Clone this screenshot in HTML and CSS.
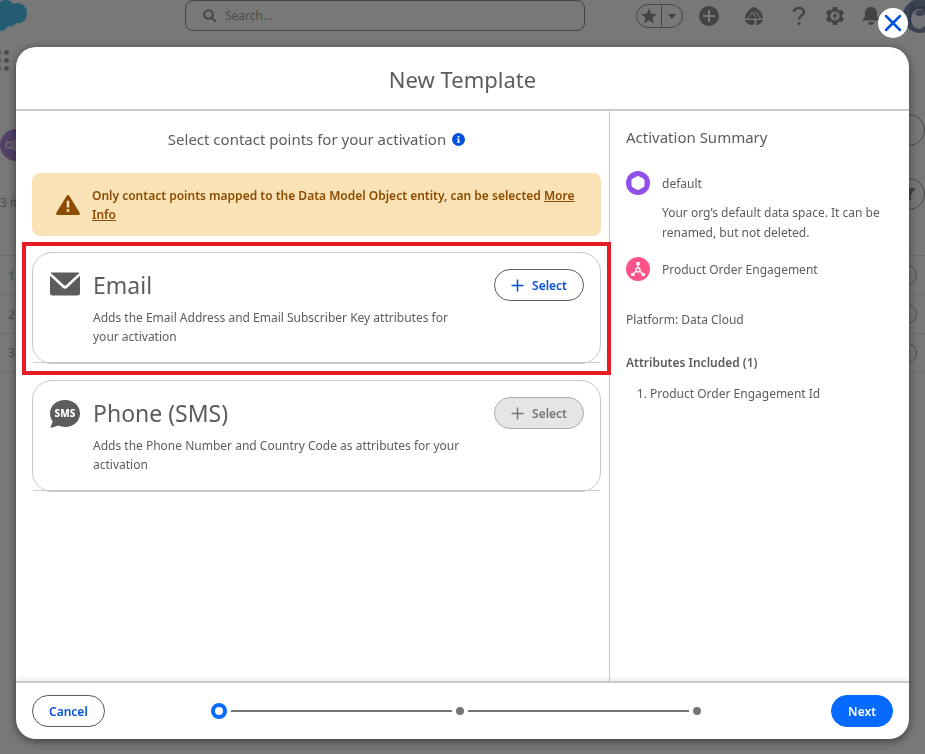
FILE: index.html
```html
<!DOCTYPE html>
<html lang="en">
<head>
    <meta charset="UTF-8">
    <meta name="viewport" content="width=device-width, initial-scale=1.0">
    <title>New Template</title>
    <link rel="stylesheet" href="styles.css">
</head>
<body>

    <div class="app">
        <header class="app-header">
            <svg class="cloud" width="28" height="32" viewBox="0 0 28 32" aria-hidden="true">
                <path d="M0 2C3-1 10-1 13 4C20 1 27 6 27 13C27 20 22 24 16 23C14 26 11 27 8 26C6 30 3 31 0 31Z"/>
            </svg>
            <div class="search">
                <svg width="14" height="14" viewBox="0 0 14 14" aria-hidden="true">
                    <circle cx="5.5" cy="5.5" r="4.3"/>
                    <path d="M8.8 8.8L12.8 12.8"/>
                </svg>
                <input type="search" placeholder="Search..." aria-label="Search">
            </div>
            <nav class="actions">
                <div class="favorites">
                    <button type="button" aria-label="Favorite">
                        <svg width="18" height="18" viewBox="0 0 18 18"><path d="M9 1L11.1 6.7L17 7L12.4 10.7L14 16.5L9 13.2L4 16.5L5.6 10.7L1 7L6.9 6.7Z"/></svg>
                    </button>
                    <button type="button" aria-label="Favorites list">
                        <svg width="10" height="8" viewBox="0 0 10 8"><path d="M1 2H9L5 7Z"/></svg>
                    </button>
                </div>
                <button class="wide" type="button" aria-label="Create">
                    <svg width="20" height="20" viewBox="0 0 20 20"><circle cx="10" cy="10" r="10"/><path class="cut" d="M10 4V16M4 10H16"/></svg>
                </button>
                <button class="wide" type="button" aria-label="Trailhead">
                    <svg width="20" height="20" viewBox="0 0 20 20"><path d="M10 1C13 1 14 4 16 5C18 7 19 10 19 12.500H1C1 10 2 7 4 5C6 4 7 1 10 1Z"/><path d="M1 14H9.500L11 16L9 19C5 19 2 17.500 1 14ZM12 14H19C18 17.500 15 19 11.500 19L13 16Z"/><path class="cut thin" d="M3.500 12.500L8.500 6L12 11.500M10 8.500L12.300 6L16.500 12.500"/></svg>
                </button>
                <button type="button" aria-label="Help">
                    <svg width="14" height="20" viewBox="0 0 14 20"><path class="stroke" d="M2 6C2 0.500 12 0.500 12 6C12 9.500 7 9.500 7 13.500"/><circle cx="7" cy="17.500" r="1.600"/></svg>
                </button>
                <button type="button" aria-label="Setup">
                    <svg width="20" height="20" viewBox="0 0 20 20"><path d="M8 1H12L12.600 3.600L14.400 4.600L17 3.800L19 7.200L17.100 9V11L19 12.800L17 16.200L14.400 15.400L12.600 16.400L12 19H8L7.400 16.400L5.600 15.400L3 16.200L1 12.800L2.900 11V9L1 7.200L3 3.800L5.600 4.600L7.400 3.600Z"/><circle class="hole" cx="10" cy="10" r="4.600"/><path d="M11.500 6L7.500 10.500H9.700L8.700 14L12.700 9.300H10.500Z"/></svg>
                </button>
                <button class="bell" type="button" aria-label="Notifications">
                    <svg width="20" height="20" viewBox="0 0 20 20"><path d="M10 1C13.500 1 16 3.500 16 7V10C16 12 18.500 12.500 18.500 14.500H1.500C1.500 12.500 4 12 4 10V7C4 3.500 6.500 1 10 1ZM7 16H13C13 20 7 20 7 16Z"/></svg>
                </button>
                <svg class="avatar" width="34" height="34" viewBox="0 0 34 34" aria-hidden="true">
                    <circle class="avatar-bg" cx="17" cy="17" r="17"/>
                    <path class="avatar-ear" d="M6 10L8 4L14 8L22 7L27 5L29 12V20L24 28H12L6 22Z"/>
                    <ellipse class="avatar-face" cx="16" cy="20" rx="8" ry="10"/>
                    <ellipse class="avatar-bg" cx="17" cy="14" rx="5" ry="3"/>
                </svg>
            </nav>
        </header>

        <div class="waffle" aria-hidden="true">
            <i></i><i></i><i></i><i></i><i></i><i></i>
        </div>

        <div class="page-head">
            <svg class="object-icon" width="32" height="32" viewBox="0 0 32 32" aria-hidden="true">
                <circle cx="16" cy="16" r="16"/>
                <path d="M9 13A3 3 0 1 0 9 19A3 3 0 1 0 9 13M11 14L16 11M11 18L16 21M20 7V11M20 21V24"/>
                <circle class="ring" cx="20" cy="16" r="5"/>
            </svg>
            <button class="round" type="button" aria-label="Actions"></button>
        </div>
        <div class="list-head">
            <span>3 items</span>
            <button class="round" type="button" aria-label="Filter">
                <svg width="14" height="14" viewBox="0 0 14 14"><path d="M0 1H14L9 7V13H5V7Z"/></svg>
            </button>
        </div>
        <ol class="rows">
            <li><span>1</span><button class="round small" type="button" aria-label="Row 1 actions">▾</button></li>
            <li><span>2</span><button class="round small" type="button" aria-label="Row 2 actions">▾</button></li>
            <li><span>3</span><button class="round small" type="button" aria-label="Row 3 actions">▾</button></li>
        </ol>
    </div>

    <div class="backdrop">
        <section class="modal" role="dialog" aria-labelledby="modal-title">
            <button class="close" type="button" aria-label="Close">
                <svg width="18" height="18" viewBox="0 0 18 18"><path d="M2 2L16 16M16 2L2 16"/></svg>
            </button>

            <header class="modal-header">
                <h1 id="modal-title">New Template</h1>
            </header>

            <div class="modal-body">
                <main class="content">
                    <h2 class="prompt">
                        Select contact points for your activation
                        <svg width="13" height="13" viewBox="0 0 13 13" aria-hidden="true"><circle cx="6.500" cy="6.500" r="6.500"/><path d="M5.600 3H7.400V4.600H5.600ZM5.200 5.500H7.400V8.800H8V9.800H5V8.800H5.700V6.500H5.200Z"/></svg>
                    </h2>

                    <div class="alert">
                        <svg width="24" height="20" viewBox="0 0 24 20" aria-hidden="true">
                            <path d="M10.600 0.900Q12-0.900 13.400 0.900L23.700 17.800Q24.300 20 22.300 20H1.700Q-0.300 20 0.300 17.800Z"/>
                            <path class="mark" d="M10.700 5.800H13.300V12.600H10.700ZM10.700 14.200H13.300V16.700H10.700Z"/>
                        </svg>
                        <p>Only contact points mapped to the Data Model Object entity, can be selected <a href="#">More Info</a></p>
                    </div>

                    <article class="card highlighted">
                        <svg class="card-icon" width="30" height="24" viewBox="0 0 30 24" aria-hidden="true">
                            <path d="M1.500 0.500H28.500Q29.500 0.500 29 1.300L16 13.300Q15 14 14 13.300L1 1.300Q0.500 0.500 1.500 0.500Z"/>
                            <path d="M0 3.800L12.800 15.800Q15 17.600 17.200 15.800L30 3.800V20.800Q30 23.500 27.500 23.500H2.500Q0 23.500 0 20.800Z"/>
                        </svg>
                        <div class="card-text">
                            <h3>Email</h3>
                            <p>Adds the Email Address and Email Subscriber Key attributes for your activation</p>
                        </div>
                        <button class="btn" type="button">
                            <svg width="13" height="13" viewBox="0 0 13 13" aria-hidden="true"><path d="M6.500 0.500V12.500M0.500 6.500H12.500"/></svg>
                            Select
                        </button>
                    </article>

                    <article class="card">
                        <svg class="card-icon" width="30" height="28" viewBox="0 0 30 28" aria-hidden="true">
                            <path d="M15 0C23.500 0 30 5.800 30 13.500S23.500 27 15 27C12.500 27 10.500 26.500 8.500 25.600L1.500 27.800Q0.300 28 0.700 26.800L2.700 21.500C1 19.200 0 16.500 0 13.500C0 5.800 6.500 0 15 0Z"/>
                            <text x="15" y="17">SMS</text>
                        </svg>
                        <div class="card-text">
                            <h3>Phone (SMS)</h3>
                            <p>Adds the Phone Number and Country Code as attributes for your activation</p>
                        </div>
                        <button class="btn" type="button" disabled>
                            <svg width="13" height="13" viewBox="0 0 13 13" aria-hidden="true"><path d="M6.500 0.500V12.500M0.500 6.500H12.500"/></svg>
                            Select
                        </button>
                    </article>
                </main>

                <aside class="summary">
                    <h2>Activation Summary</h2>
                    <div class="entity">
                        <svg width="24" height="24" viewBox="0 0 24 24" aria-hidden="true">
                            <circle cx="12" cy="12" r="12" fill="#9050e9"/>
                            <path d="M12 5.300L18 8.600V15.400L12 18.700L6 15.400V8.600Z" fill="#fff" stroke="#fff" stroke-linejoin="round"/>
                        </svg>
                        <span>default</span>
                    </div>
                    <p class="entity-note">Your org’s default data space. It can be renamed, but not deleted.</p>
                    <div class="entity">
                        <svg width="24" height="24" viewBox="0 0 24 24" aria-hidden="true">
                            <circle cx="12" cy="12" r="12" fill="#ff538a"/>
                            <path d="M12 7V11.500M10.500 14L7 17M13.500 14L17 17" fill="none" stroke="#fff" stroke-width="1.300"/>
                            <circle cx="12" cy="13" r="2" fill="#ff538a" stroke="#fff" stroke-width="1.300"/>
                            <path d="M10.300 5H13.700V8.200H10.300ZM5 16H8.500V19H5ZM15.500 16H19V19H15.500Z" fill="#fff"/>
                        </svg>
                        <span>Product Order Engagement</span>
                    </div>
                    <p class="platform">Platform: Data Cloud</p>
                    <h3>Attributes Included (1)</h3>
                    <ol>
                        <li>Product Order Engagement Id</li>
                    </ol>
                </aside>
            </div>

            <footer class="modal-footer">
                <button class="btn" type="button">Cancel</button>
                <div class="progress" role="progressbar" aria-label="Step 1 of 3" aria-valuemin="1" aria-valuemax="3" aria-valuenow="1">
                    <span class="step active"></span>
                    <span class="line"></span>
                    <span class="step"></span>
                    <span class="line"></span>
                    <span class="step"></span>
                </div>
                <button class="btn brand" type="button">Next</button>
            </footer>
        </section>
    </div>

</body>
</html>
```
FILE: styles.css
```css
* { box-sizing: border-box; }
body { margin: 0; height: 100vh; overflow: hidden; background: #f0f0f0; color: #5c5c5c; font-family: "Segoe UI", "Noto Sans", sans-serif; font-size: 12px; line-height: 19px; }
h1, h2, h3, p, ol { margin: 0; font-weight: 400; }
button { font: inherit; cursor: pointer; }
svg { display: block; flex: none; }

/* page behind the dialog */
.app { height: 100vh; overflow: hidden; }
.app-header { display: grid; grid-template-columns: 185px minmax(200px, 400px) 1fr; grid-template-rows: 31px; }
.cloud { fill: #48b8e4; }
.search { display: flex; align-items: center; gap: 6px; padding: 0 17px; border: 1px solid #8a8a8a; border-radius: 8px; }
.search svg { fill: none; stroke: #8a8a8a; stroke-width: 2; }
.search input { flex: 1; min-width: 0; border: 0; background: none; font: inherit; }
.search input::placeholder { color: #9a9a9a; }
.actions { display: flex; align-items: center; justify-content: flex-end; gap: 16px; margin-right: -12px; }
.actions button { display: flex; align-items: center; justify-content: center; min-width: 20px; padding: 0; border: 0; background: none; }
.actions .wide { margin-right: 9px; }
.actions .bell { margin-right: 6px; }
.actions svg { fill: #868686; }
.actions .stroke { fill: none; stroke: #868686; stroke-width: 2.5; }
.actions .cut { fill: none; stroke: #f0f0f0; stroke-width: 2; }
.actions .thin { stroke-width: 1; }
.actions .hole { fill: #f0f0f0; }
.favorites { display: flex; height: 24px; border: 1px solid #8a8a8a; border-radius: 12px; }
.favorites button:first-child { width: 25px; border-right: 1px solid #8a8a8a; }
.actions .avatar-bg { fill: #7b86a5; }
.actions .avatar-ear { fill: #6a7490; }
.actions .avatar-face { fill: #e0e4ec; }
.waffle { display: grid; grid-template-columns: 5px 5px; gap: 3px; width: max-content; margin: 19px 0 0 -4px; }
.waffle i { height: 5px; border-radius: 50%; background: #9a9a9a; }
.page-head, .list-head { display: flex; align-items: center; justify-content: space-between; }
.page-head { height: 64px; margin-top: 42px; }
.page-head .round { margin-bottom: 30px; }
.object-icon { fill: #a67fd0; }
.object-icon path, .object-icon .ring { fill: none; stroke: #d8c8e8; stroke-width: 2; }
.round { display: flex; align-items: center; justify-content: center; width: 32px; height: 32px; padding: 0; border: 1px solid #999; border-radius: 50%; background: none; color: #777; }
.round svg { fill: #8a8a8a; }
.round.small { width: 20px; height: 20px; margin-right: 8px; }
.list-head { height: 50px; color: #999; }
.list-head .round { margin-bottom: 16px; }
.rows { margin-top: 28px; padding: 0; list-style: none; color: #999; }
.rows li { display: flex; align-items: center; justify-content: space-between; height: 39px; padding-left: 8px; border-top: 1px solid #d8d8d8; }
.rows li:last-child { border-bottom: 1px solid #d8d8d8; }

/* dialog */
.backdrop { position: fixed; inset: 0; display: flex; padding: 47px 16px 15px; background: rgba(0, 0, 0, 0.5); }
.modal { position: relative; flex: 1; min-width: 0; display: flex; flex-direction: column; border-radius: 20px; background: #fff; box-shadow: 0 2px 10px rgba(0, 0, 0, 0.5); }
.close { position: absolute; top: -39px; right: 1px; display: flex; align-items: center; justify-content: center; width: 30px; height: 30px; padding: 0; border: 0; border-radius: 50%; background: #fff; }
.close svg { fill: none; stroke: #0250d9; stroke-width: 2.5; stroke-linecap: round; }
.modal-header { padding: 15px 16px 13px; border-bottom: 2px solid #c9c9c9; text-align: center; }
.modal-header h1 { font-size: 22px; line-height: 34px; }
.modal-body { flex: 1; min-height: 0; display: grid; grid-template-columns: 1fr 300px; }

.content { padding: 15px 8px 16px 16px; }
.prompt { display: flex; align-items: center; justify-content: center; gap: 6px; margin-bottom: 21px; font-size: 15px; line-height: 26px; }
.prompt svg { fill: #0250d9; }
.prompt path { fill: #fff; }
.alert { display: flex; align-items: center; gap: 12px; padding: 13px 16px 12px 24px; border-radius: 8px; background: #f9e3b6; color: #8c4b02; }
.alert p { font-weight: 600; }
.alert svg { fill: #8c4b02; }
.alert .mark { fill: #f9e3b6; }
.alert a { color: inherit; }

.card { position: relative; display: flex; align-items: flex-start; margin-top: 16px; padding: 16px 16px 17px 17px; border: 1px solid #c9c9c9; border-radius: 20px; }
.card::after { content: ""; position: absolute; left: 0; right: 0; bottom: 0; border-bottom: 1px solid #c9c9c9; }
.card-icon { margin: 3px 13px 0 0; fill: #5c5c5c; }
.card-icon text { fill: #fff; font-size: 10px; font-weight: 800; text-anchor: middle; }
.card-text { flex: 1; padding-right: 20px; }
.card-text h3 { margin-bottom: 6px; font-size: 23px; line-height: 33px; }
.highlighted::before { content: ""; position: absolute; inset: -11px -11px -12px; border: 4px solid #e51c25; pointer-events: none; }

.btn { display: flex; align-items: center; justify-content: center; gap: 8px; height: 32px; padding: 0 16px; border: 1px solid #5c5c5c; border-radius: 16px; background: #fff; color: #0250d9; font-weight: 600; }
.btn svg { fill: none; stroke: currentColor; stroke-width: 1.5; }
.btn:disabled { border-color: #aeaeae; background: #e5e5e5; color: #757575; cursor: default; }
.btn.brand { border-color: #066afe; background: #066afe; color: #fff; }

.summary { padding: 15px 16px; border-left: 1px solid #c9c9c9; }
.summary h2 { margin-bottom: 23px; font-size: 15px; line-height: 22px; }
.entity { display: flex; align-items: center; gap: 12px; }
.entity-note { margin: 8px 0 14px 36px; line-height: 20px; }
.platform { margin-top: 29px; }
.summary h3 { margin: 24px 0 12px; font-weight: 600; font-size: 12px; }
.summary ol { padding-left: 24px; }

.modal-footer { display: flex; align-items: center; padding: 12px 16px; border-top: 2px solid #c9c9c9; border-radius: 0 0 20px 20px; box-shadow: 0 -2px 4px rgba(0, 0, 0, 0.08); }
.progress { flex: 1; display: flex; align-items: center; margin: 0 130px 0 106px; }
.step { width: 8px; height: 8px; border-radius: 50%; background: #757575; }
.step.active { width: 16px; height: 16px; border: 4px solid #066afe; background: #fff; }
.line { flex: 1; height: 2px; margin: 0 4px; background: #757575; }
```
